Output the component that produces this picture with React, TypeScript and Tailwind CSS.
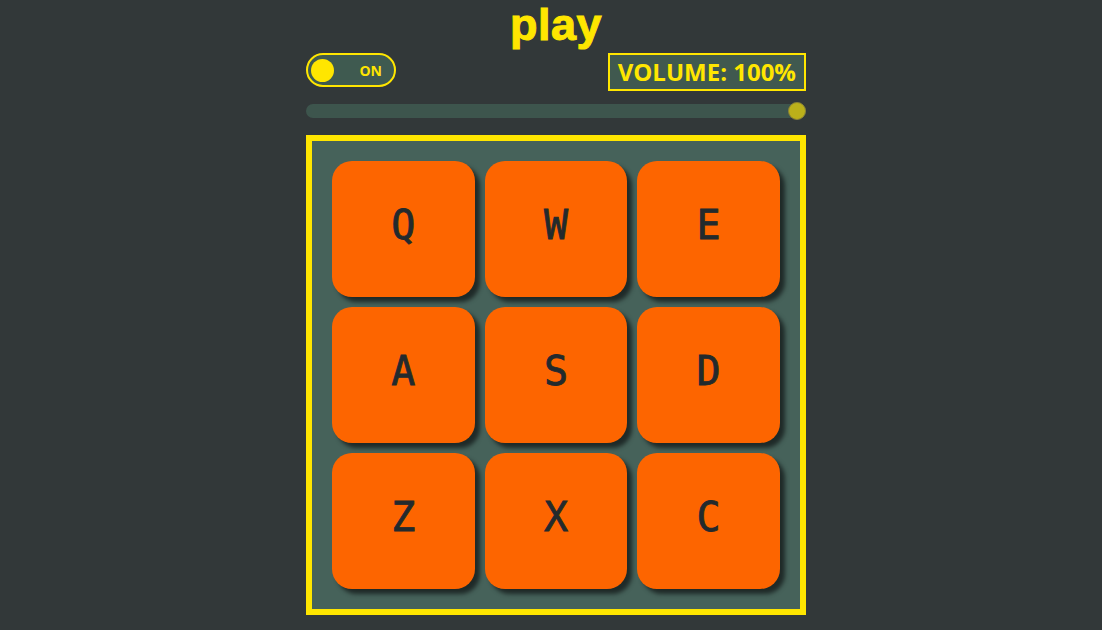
import React from "react";

const keys = ["Q", "W", "E", "A", "S", "D", "Z", "X", "C"];

export default function App() {
  return (
    <div className="min-h-[630px] w-full bg-[#323839] flex justify-center pl-[10px]">
      <div className="w-[500px] flex flex-col">
        <h1
          className="text-center text-[45px] leading-[48px] font-bold text-[#ffe600] mt-[1px] h-[52px] tracking-[0.5px]"
          style={{ fontFamily: '"Liberation Sans", Arial, sans-serif', WebkitTextStroke: "1px #ffe600" }}
        >
          play
        </h1>
        <div className="flex justify-between items-start h-[51px]">
          <div className="w-[90px] h-[34px] rounded-full border-2 border-[#ffe600] bg-[#3f5a50] flex items-center px-[3px]">
            <div className="w-[23px] h-[23px] rounded-full bg-[#ffe600]" />
            <span
              className="ml-auto mr-[9px] text-[14px] font-bold text-[#ffe600]"
              style={{ fontFamily: '"Open Sans", sans-serif' }}
            >
              ON
            </span>
          </div>
          <div
            className="h-[38px] border-2 border-[#ffe600] bg-[#40594f] flex items-center px-[8px] text-[24px] font-bold text-[#ffe600] tracking-[0px]"
            style={{ fontFamily: '"Open Sans", sans-serif' }}
          >
            VOLUME: 100%
          </div>
        </div>
        <div className="relative h-[14px] rounded-full bg-[#3d554d]">
          <div className="absolute right-0 top-[-2px] w-[18px] h-[18px] rounded-full bg-[#bbb01a] border border-[#8a8235]" />
        </div>
        <div className="mt-[17px] h-[480px] border-[6px] border-[#ffe600] bg-[#46625a] p-[20px] grid grid-cols-3 grid-rows-3 gap-[10px]">
          {keys.map((k) => (
            <div
              key={k}
              className="rounded-[20px] bg-[#fd6500] shadow-[5px_5px_4px_#1f2a28] flex items-center justify-center pb-[8px] text-[40px] font-normal text-[#232a2d]"
              style={{ fontFamily: '"DejaVu Sans Mono", monospace', WebkitTextStroke: "0.8px #232a2d" }}
            >
              {k}
            </div>
          ))}
        </div>
      </div>
    </div>
  );
}
